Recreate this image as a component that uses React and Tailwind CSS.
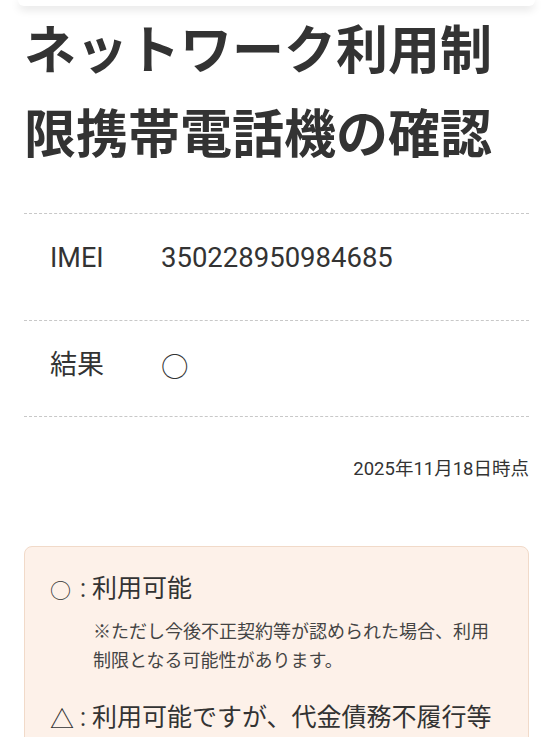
export default function App() {
  const rows = [
    { label: "IMEI", value: "350228950984685", pad: "pt-[26px] pb-[44px]" },
    { label: "結果", value: "○", pad: "pt-[26px] pb-[30px]" },
  ];

  return (
    <div
      className="min-h-[737px] w-full overflow-hidden bg-white text-[#333]"
      style={{ fontFamily: "Roboto, 'Noto Sans CJK JP', sans-serif" }}
    >
      {/* bottom edge of the bar above, scrolled off */}
      <div className="mx-[18px] h-[6px] rounded-b-[14px] bg-white shadow-[0_3px_10px_rgba(0,0,0,0.14)]" />

      <div className="px-6">
        <h1 className="-mt-[1px] text-[52px] font-bold leading-[84px] text-[#333]" style={{ fontFamily: "'Noto Sans CJK JP', sans-serif" }}>
          ネットワーク利用制限携帯電話機の確認
        </h1>

        <div className="mt-[40px] border-b border-dashed border-[#c8c8c8]">
          {rows.map((row) => (
            <div key={row.label} className={`flex border-t border-dashed border-[#c8c8c8] pl-[26px] ${row.pad}`}>
              <div className="w-[111px] text-[27px] leading-[36px]">{row.label}</div>
              <div className="text-[27.5px] leading-[36px]">
                {row.label === "結果" ? (
                  <span style={{ fontFamily: "'Noto Sans CJK JP', sans-serif" }}>{row.value}</span>
                ) : (
                  row.value
                )}
              </div>
            </div>
          ))}
        </div>

        <p className="mt-[37px] text-right text-[18.5px] leading-[30px]">2025年11月18日時点</p>

        <div className="mt-[62px] rounded-lg border border-[#f1dac9] bg-[#fdf1e9] px-[25px] pt-[22px] pb-6">
          <div className="flex items-center text-[25px] leading-[40px]">
            <span className="flex w-[24px] justify-start text-[21px]" style={{ fontFamily: "'Noto Sans CJK JP', sans-serif" }}>○</span>
            <span className="w-[18px] text-center">:</span>
            <span>利用可能</span>
          </div>
          <p className="mt-[8px] pl-[43px] pr-[12px] text-[18px] leading-[29px] text-[#444]">
            ※ただし今後不正契約等が認められた場合、利用制限となる可能性があります。
          </p>
          <div className="mt-[23px] flex items-center text-[25px] leading-[40px]">
            <span className="flex w-[24px] justify-start text-[24px]" style={{ fontFamily: "'Noto Sans CJK JP', sans-serif" }}>△</span>
            <span className="w-[18px] text-center">:</span>
            <span>利用可能ですが、代金債務不履行等</span>
          </div>
        </div>
      </div>
    </div>
  );
}
